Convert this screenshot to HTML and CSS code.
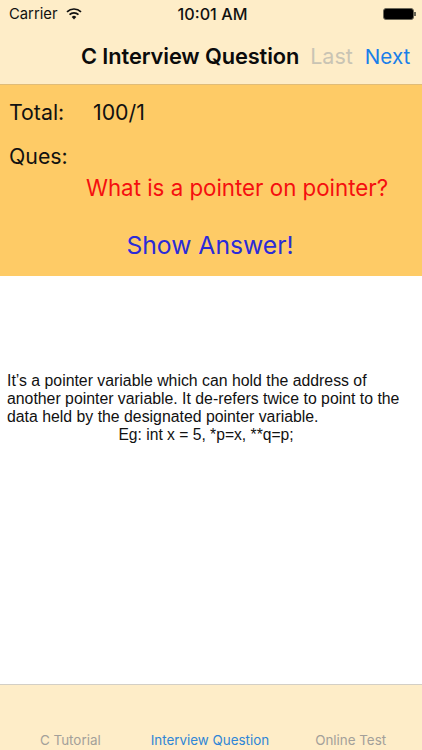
FILE: index.html
```html
<!DOCTYPE html>
<html lang="en">
<head>
<meta charset="utf-8">
<title>C Interview Question</title>
<link rel="stylesheet" href="styles.css">
</head>
<body>
<div class="app">
  <header class="top">
    <div class="status">
      <div class="status-left">
        <span>Carrier</span>
        <svg class="wifi" width="16" height="12" viewBox="0 0 16 12"><path d="M8 11.6 5.7 8.9a3.3 3.3 0 0 1 4.6 0Z" fill="#111"/><path d="M3.5 6.6a6.6 6.6 0 0 1 9 0M1 3.8a10.2 10.2 0 0 1 14 0" fill="none" stroke="#111" stroke-width="1.7"/></svg>
      </div>
      <div class="status-time">10:01 AM</div>
      <div class="status-right">
        <span class="battery"></span><span class="battery-tip"></span>
      </div>
    </div>
    <nav class="navbar">
      <span class="nav-title">C Interview Question</span>
      <span class="nav-last">Last</span>
      <span class="nav-next">Next</span>
    </nav>
  </header>
  <section class="panel">
    <div class="total-row"><span class="total-label">Total:</span><span>100/1</span></div>
    <div class="ques-label">Ques:</div>
    <div class="question">What is a pointer on pointer?</div>
    <div class="show">Show Answer!</div>
  </section>
  <main class="answer">
    <p class="answer-text">It’s a pointer variable which can hold the address of another pointer variable. It de-refers twice to point to the data held by the designated pointer variable.</p>
    <p class="answer-eg">Eg: int x = 5, *p=x, **q=p;</p>
  </main>
  <footer class="tabs">
    <span class="tab tab-one">C Tutorial</span>
    <span class="tab tab-two">Interview Question</span>
    <span class="tab tab-three">Online Test</span>
  </footer>
</div>
</body>
</html>
```
FILE: styles.css
```css
* { box-sizing: border-box; }
html, body { margin: 0; padding: 0; }
body { width: 422px; height: 750px; overflow: hidden; background: #fff; font-family: Inter, "Liberation Sans", sans-serif; color: #000; }
.app { display: flex; flex-direction: column; height: 750px; }
.top { height: 85px; background: #feedc8; border-bottom: 1px solid #e0bc78; flex: none; }
.status { height: 28px; display: flex; align-items: center; justify-content: space-between; padding: 0 6px 0 9px; font-size: 14.8px; color: #111; }
.status-left { display: flex; align-items: center; gap: 8px; width: 120px; }
.status-time { font-weight: 500; font-size: 16.2px; }
.status-right { width: 120px; display: flex; justify-content: flex-end; align-items: center; }
.battery { width: 31px; height: 12px; border: 1px solid #6b6757; border-radius: 3px; background: #000; display: block; }
.battery-tip { width: 2px; height: 4px; background: #6b6757; }
.navbar { height: 56px; display: flex; align-items: center; padding: 0 0 0 81px; white-space: nowrap; }
.nav-title { font-size: 21.8px; font-weight: 600; color: #0b0b0b; letter-spacing: -0.1px; }
.nav-last { margin-left: 11px; font-size: 21.5px; color: #c9c4b4; }
.nav-next { margin-left: 12px; font-size: 20.6px; color: #1a7fe8; }
.panel { height: 191px; background: #fecb66; flex: none; padding: 0 9px; font-size: 21.3px; color: #111; }
.total-row { display: flex; padding: 15px 0 0 0; height: 52px; line-height: 24px; }
.total-label { width: 84px; }
.ques-label { height: 39px; padding-top: 7px; line-height: 24px; }
.question { color: #f50f0f; text-align: center; font-size: 22.3px; line-height: 24px; height: 42px; padding-left: 52px; white-space: nowrap; }
.show { color: #2b2bd8; text-align: center; font-size: 24.7px; line-height: 30px; padding: 12px 2px 0 0; height: 42px; }
.answer { flex: 1; background: #fff; padding: 96px 17px 0 7px; font-family: "Liberation Sans", Arial, sans-serif; font-size: 15.65px; line-height: 18px; color: #111; }
.answer p { margin: 0; }
.answer .answer-text { font-size: 15.83px; }
.answer-eg { text-align: center; }
.tabs { height: 66px; flex: none; background: #feedc8; border-top: 1px solid #d3cfc6; font-size: 13.4px; display: flex; padding-top: 47px; line-height: 16px; }
.tab { color: #a3a09a; }
.tab-one { margin-left: 40px; }
.tab-two { margin-left: 50px; color: #2f86d6; }
.tab-three { margin-left: 46px; }
```
